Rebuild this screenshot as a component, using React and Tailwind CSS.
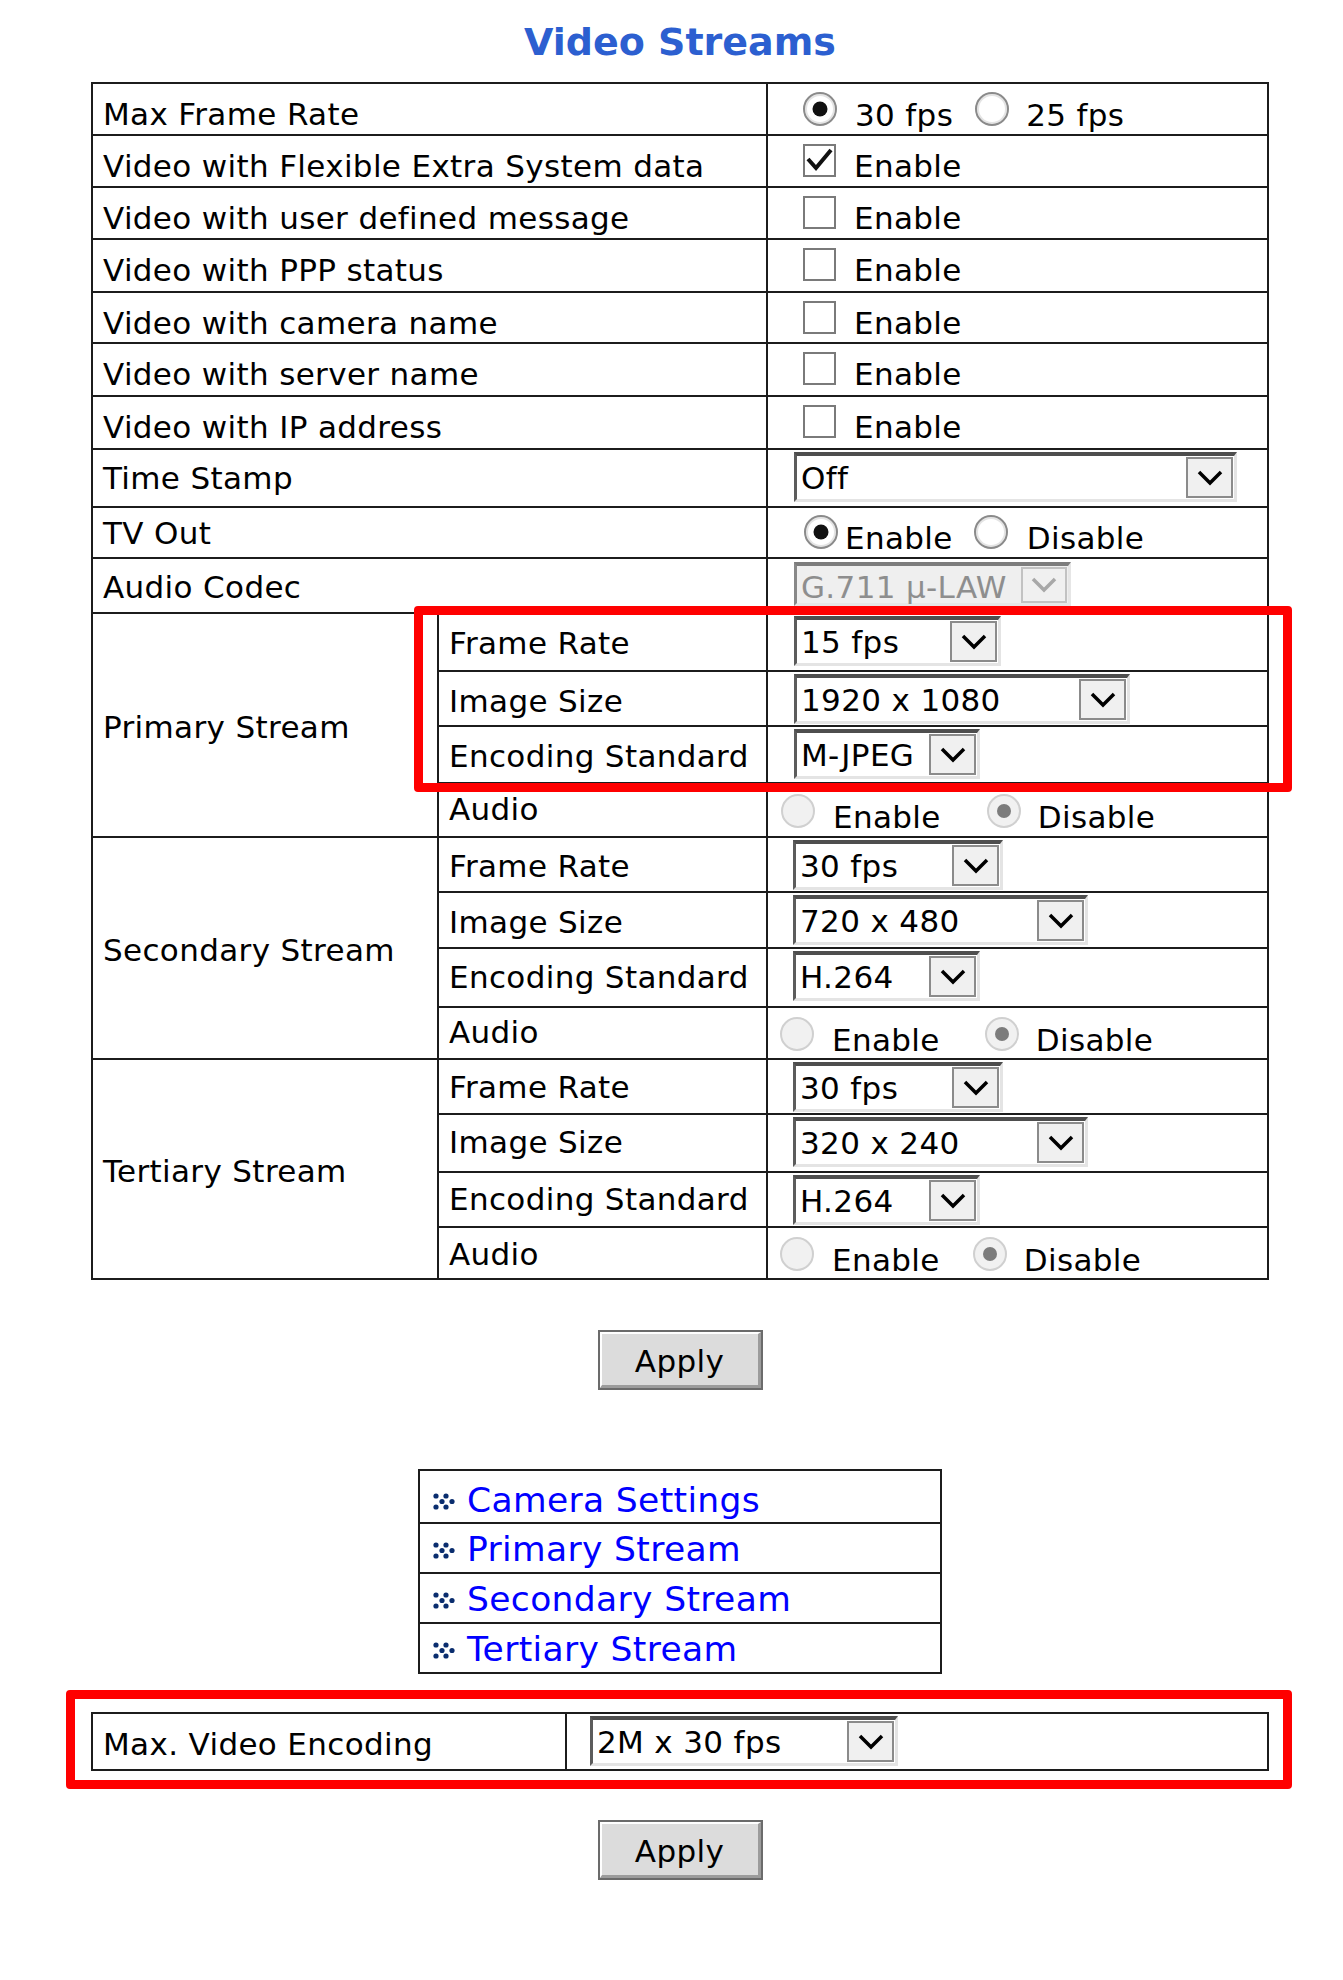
import React from "react";

const line = "border-r-2 border-b-2 border-[#1c1c1c]";

function Radio({ checked = false, disabled = false, className = "" }) {
  if (disabled) {
    return (
      <span className={`relative inline-block w-[34px] h-[34px] rounded-full border-2 border-[#d0d0d0] bg-[#f1f1f1] align-baseline ${className}`}>
        {checked && (
          <span className="absolute left-1/2 top-1/2 w-[14px] h-[14px] -translate-x-1/2 -translate-y-1/2 rounded-full bg-[#7c7c7c]" />
        )}
      </span>
    );
  }
  return (
    <span className={`relative inline-block w-[34px] h-[34px] rounded-full border-2 border-[#8a8a8a] bg-white shadow-[inset_0_0_0_2px_#e4e4e4] align-baseline ${className}`}>
      {checked && (
        <span className="absolute left-1/2 top-1/2 w-[15px] h-[15px] -translate-x-1/2 -translate-y-1/2 rounded-full bg-[#111]" />
      )}
    </span>
  );
}

function Checkbox({ checked = false }) {
  return (
    <span className="relative inline-block w-[33px] h-[33px] border-2 border-[#7a7a7a] bg-white align-baseline">
      {checked && (
        <svg className="absolute inset-0" width="29" height="29" viewBox="0 0 29 29">
          <polyline points="3,13 11,22 26,4" fill="none" stroke="#111" strokeWidth="4" />
        </svg>
      )}
    </span>
  );
}

function Chevron({ color = "#000" }) {
  return (
    <svg width="26" height="16" viewBox="0 0 26 16">
      <polyline points="2,2 13,13 24,2" fill="none" stroke={color} strokeWidth="3.5" />
    </svg>
  );
}

function Select({ value, w, disabled = false }) {
  if (disabled) {
    return (
      <span className={`inline-flex items-center h-[44px] ${w} bg-[#efefef] border-t-[4px] border-l-[3px] border-r-[3px] border-b-[3px] border-t-[#7d7d7d] border-l-[#888] border-r-[#e6e6e6] border-b-[#e6e6e6]`}>
        <span className="flex-1 self-start pt-[3px] pl-[4px] leading-[36px] whitespace-nowrap text-[#8e8e8e]">{value}</span>
        <span className="flex items-center justify-center w-[46px] h-[36px] mr-[1px] bg-[#f0f0f0] border-2 border-[#c2c2c2]">
          <Chevron color="#a8a8a8" />
        </span>
      </span>
    );
  }
  return (
    <span className={`inline-flex items-center h-[50px] ${w} bg-white border-t-[4px] border-l-[3px] border-r-[3px] border-b-[3px] border-t-[#4e4e4e] border-l-[#5c5c5c] border-r-[#e4e4e4] border-b-[#e4e4e4]`}>
      <span className="flex-1 pl-[4px] leading-[36px] whitespace-nowrap">{value}</span>
      <span className="flex items-center justify-center w-[47px] h-[41px] mr-[1px] bg-[#f0f0f0] border-2 border-[#8b8b8b]">
        <Chevron />
      </span>
    </span>
  );
}

function Label({ children, pt, span = false }) {
  return (
    <div className={`${line} ${span ? "col-span-2" : ""} pl-[10px] ${pt} leading-[36px] whitespace-nowrap`}>
      {children}
    </div>
  );
}

function Value({ children, className = "" }) {
  return <div className={`${line} leading-[36px] whitespace-nowrap ${className}`}>{children}</div>;
}

function StreamLabel({ children }) {
  return (
    <div className={`${line} row-span-4 flex items-center pl-[10px] pt-[3px] leading-[36px] whitespace-nowrap`}>
      {children}
    </div>
  );
}

function ApplyButton({ className = "" }) {
  return (
    <button className={`block mx-auto w-[165px] h-[60px] border-2 border-[#6b6b6b] bg-[#dcdcdc] ${className}`}>
      <span className="block h-full border-t-2 border-l-2 border-t-white border-l-white border-r-[3px] border-b-[3px] border-r-[#9c9c9c] border-b-[#9c9c9c] pt-[9px] text-center leading-[36px]">
        Apply
      </span>
    </button>
  );
}

// dotted "»" used in front of each link
function Bullet() {
  const dots = [
    [3, 3], [9, 8.5], [3, 14],
    [13, 3], [19, 8.5], [13, 14],
  ];
  return (
    <svg className="inline-block align-[2px] mr-[10px]" width="24" height="17" viewBox="0 0 24 17">
      {dots.map(([cx, cy], i) => (
        <circle key={i} cx={cx} cy={cy} r="2.6" fill="#0a2d6e" />
      ))}
    </svg>
  );
}

function AudioRow({ pl, pt, gap }) {
  return (
    <Value className={`${pt} ${pl}`}>
      <Radio disabled />
      <span className="ml-[18px]">Enable</span>
      <Radio disabled checked className={gap} />
      <span className="ml-[17px]">Disable</span>
    </Value>
  );
}

function CheckRow({ label, checked = false }) {
  return (
    <>
      <Label span pt="pt-[12px]">{label}</Label>
      <Value className="pt-[8px] pl-[35px]">
        <Checkbox checked={checked} />
        <span className="ml-[18px]">Enable</span>
      </Value>
    </>
  );
}

export default function App() {
  const links = ["Camera Settings", "Primary Stream", "Secondary Stream", "Tertiary Stream"];

  return (
    <div className="relative min-h-[1980px] bg-white text-[31px] tracking-[0.35px] text-black font-['DejaVu_Sans',Verdana,sans-serif]">
      <div className="ml-[91px] w-[1178px]">
        <h1 className="pt-[20px] text-center text-[38px] font-bold leading-[44px] tracking-normal text-[#2c5fd0]">Video Streams</h1>

        <div className="mt-[18px] grid grid-cols-[346px_329px_501px] grid-rows-[52px_52px_52px_53px_51px_53px_53px_58px_51px_55px_58px_55px_57px_54px_55px_56px_59px_52px_55px_58px_55px_52px] border-t-2 border-l-2 border-[#1c1c1c]">
          <Label span pt="pt-[12px]">Max Frame Rate</Label>
          <Value className="pt-[8px] pl-[35px]">
            <Radio checked />
            <span className="ml-[18px]">30 fps</span>
            <Radio className="ml-[22px]" />
            <span className="ml-[17px]">25 fps</span>
          </Value>

          <CheckRow label="Video with Flexible Extra System data" checked />
          <CheckRow label="Video with user defined message" />
          <CheckRow label="Video with PPP status" />
          <CheckRow label="Video with camera name" />
          <CheckRow label="Video with server name" />
          <CheckRow label="Video with IP address" />

          <Label span pt="pt-[10px]">Time Stamp</Label>
          <Value className="flex items-start pt-[2px] pl-[26px]">
            <Select value="Off" w="w-[443px]" />
          </Value>

          <Label span pt="pt-[7px]">TV Out</Label>
          <Value className="pt-[7px] pl-[36px]">
            <Radio checked />
            <span className="ml-[7px]">Enable</span>
            <Radio className="ml-[21px]" />
            <span className="ml-[19px]">Disable</span>
          </Value>

          <Label span pt="pt-[10px]">Audio Codec</Label>
          <Value className="flex items-start pt-[3px] pl-[26px]">
            <Select value="G.711 µ-LAW" w="w-[277px]" disabled />
          </Value>

          <StreamLabel>Primary Stream</StreamLabel>
          <Label pt="pt-[11px]">Frame Rate</Label>
          <Value className="flex items-start pt-[2px] pl-[26px]">
            <Select value="15 fps" w="w-[207px]" />
          </Value>
          <Label pt="pt-[11px]">Image Size</Label>
          <Value className="flex items-start pt-[2px] pl-[26px]">
            <Select value="1920 x 1080" w="w-[336px]" />
          </Value>
          <Label pt="pt-[11px]">Encoding Standard</Label>
          <Value className="flex items-start pt-[2px] pl-[26px]">
            <Select value="M-JPEG" w="w-[186px]" />
          </Value>
          <Label pt="pt-[7px]">Audio</Label>
          <AudioRow pt="pt-[10px]" pl="pl-[13px]" gap="ml-[46px]" />

          <StreamLabel>Secondary Stream</StreamLabel>
          <Label pt="pt-[10px]">Frame Rate</Label>
          <Value className="flex items-start pt-[2px] pl-[25px]">
            <Select value="30 fps" w="w-[210px]" />
          </Value>
          <Label pt="pt-[11px]">Image Size</Label>
          <Value className="flex items-start pt-[2px] pl-[25px]">
            <Select value="720 x 480" w="w-[295px]" />
          </Value>
          <Label pt="pt-[10px]">Encoding Standard</Label>
          <Value className="flex items-start pt-[2px] pl-[25px]">
            <Select value="H.264" w="w-[187px]" />
          </Value>
          <Label pt="pt-[6px]">Audio</Label>
          <AudioRow pt="pt-[9px]" pl="pl-[12px]" gap="ml-[45px]" />

          <StreamLabel>Tertiary Stream</StreamLabel>
          <Label pt="pt-[9px]">Frame Rate</Label>
          <Value className="flex items-start pt-[2px] pl-[25px]">
            <Select value="30 fps" w="w-[210px]" />
          </Value>
          <Label pt="pt-[9px]">Image Size</Label>
          <Value className="flex items-start pt-[2px] pl-[25px]">
            <Select value="320 x 240" w="w-[295px]" />
          </Value>
          <Label pt="pt-[8px]">Encoding Standard</Label>
          <Value className="flex items-start pt-[2px] pl-[25px]">
            <Select value="H.264" w="w-[187px]" />
          </Value>
          <Label pt="pt-[8px]">Audio</Label>
          <AudioRow pt="pt-[9px]" pl="pl-[12px]" gap="ml-[33px]" />
        </div>

        <ApplyButton className="mt-[50px]" />

        <div className="mx-auto mt-[79px] grid w-[524px] grid-rows-[53px_50px_50px_50px] border-t-2 border-l-2 border-[#1c1c1c]">
          {links.map((l, i) => (
            <div
              key={l}
              className={`${line} pl-[13px] ${i === 0 ? "pt-[9px]" : "pt-[5px]"} text-[34.5px] leading-[40px] text-[#0000ff] whitespace-nowrap`}
            >
              <Bullet />
              <a href="#" className="text-[#0000ff]">{l}</a>
            </div>
          ))}
        </div>

        <div className="mt-[38px] grid grid-cols-[474px_702px] grid-rows-[57px] border-t-2 border-l-2 border-[#1c1c1c]">
          <Label pt="pt-[12px]">Max. Video Encoding</Label>
          <Value className="flex items-start pt-[2px] pl-[23px]">
            <Select value="2M x 30 fps" w="w-[308px]" />
          </Value>
        </div>

        <ApplyButton className="mt-[49px]" />
      </div>

      <div className="pointer-events-none absolute left-[414px] top-[606px] h-[186px] w-[878px] rounded-[4px] border-[9px] border-[#ff0000]" />
      <div className="pointer-events-none absolute left-[66px] top-[1690px] h-[99px] w-[1226px] rounded-[4px] border-[9px] border-[#ff0000]" />
    </div>
  );
}
